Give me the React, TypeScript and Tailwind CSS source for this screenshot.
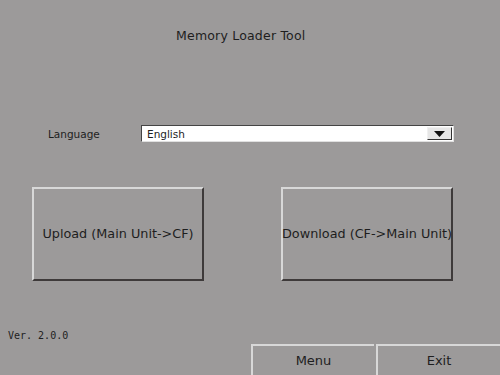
export default function App() {
  const font = { fontFamily: '"DejaVu Sans", "Noto Sans CJK JP", sans-serif' };

  return (
    <div
      className="flex h-[375px] w-[500px] flex-col bg-[#9c9a9a] text-[#1e1e1e]"
      style={font}
    >
      {/* title */}
      <div className="ml-[176px] mt-[28px] text-[12.5px] leading-[16px] tracking-[0.2px]">
        Memory Loader Tool
      </div>

      {/* language row */}
      <div className="ml-[48px] mt-[81px] flex items-center">
        <span className="w-[93px] text-[10.5px] leading-[14px]">Language</span>
        <div className="flex h-[17px] w-[313px] items-center border-l border-t border-[#444] border-b border-r border-b-[#e0e0e0] border-r-[#e0e0e0] bg-white">
          <span className="ml-[5px] flex-1 text-[10.5px] leading-[14px]">English</span>
          <div className="mr-[1px] flex h-[13px] w-[25px] items-center justify-center border border-[#333] border-l-[#f0f0f0] border-t-[#f0f0f0] bg-[#e6e6e6]">
            <svg width="11" height="6" viewBox="0 0 11 6">
              <polygon points="0,0 11,0 5.5,6" fill="#111" />
            </svg>
          </div>
        </div>
      </div>

      {/* main buttons */}
      <div className="ml-[32px] mt-[45px] flex gap-[77px]">
        <button className="flex h-[94px] w-[172px] items-center justify-center border-l-2 border-t-2 border-[#d8d8d8] border-b-2 border-r-2 border-b-[#3e3a3a] border-r-[#3e3a3a] text-[12.8px] leading-[16px] whitespace-nowrap">
          Upload (Main Unit-&gt;CF)
        </button>
        <button className="flex h-[94px] w-[172px] items-center justify-center border-l-2 border-t-2 border-[#d8d8d8] border-b-2 border-r-2 border-b-[#3e3a3a] border-r-[#3e3a3a] text-[12.8px] leading-[16px] whitespace-nowrap">
          Download (CF-&gt;Main Unit)
        </button>
      </div>

      {/* footer */}
      <div className="mt-auto flex items-end justify-between">
        <span
          className="mb-[33px] ml-[8px] text-[10px] leading-[12px]"
          style={{ fontFamily: '"DejaVu Sans Mono", monospace' }}
        >
          Ver. 2.0.0
        </span>
        <div className="flex gap-[2px]">
          <button className="flex h-[31px] w-[123px] items-center justify-center border-l-2 border-t-2 border-[#d8d8d8] text-[13px]">
            Menu
          </button>
          <button className="flex h-[31px] w-[124px] items-center justify-center border-l-2 border-t-2 border-[#d8d8d8] text-[13px]">
            Exit
          </button>
        </div>
      </div>
    </div>
  );
}
